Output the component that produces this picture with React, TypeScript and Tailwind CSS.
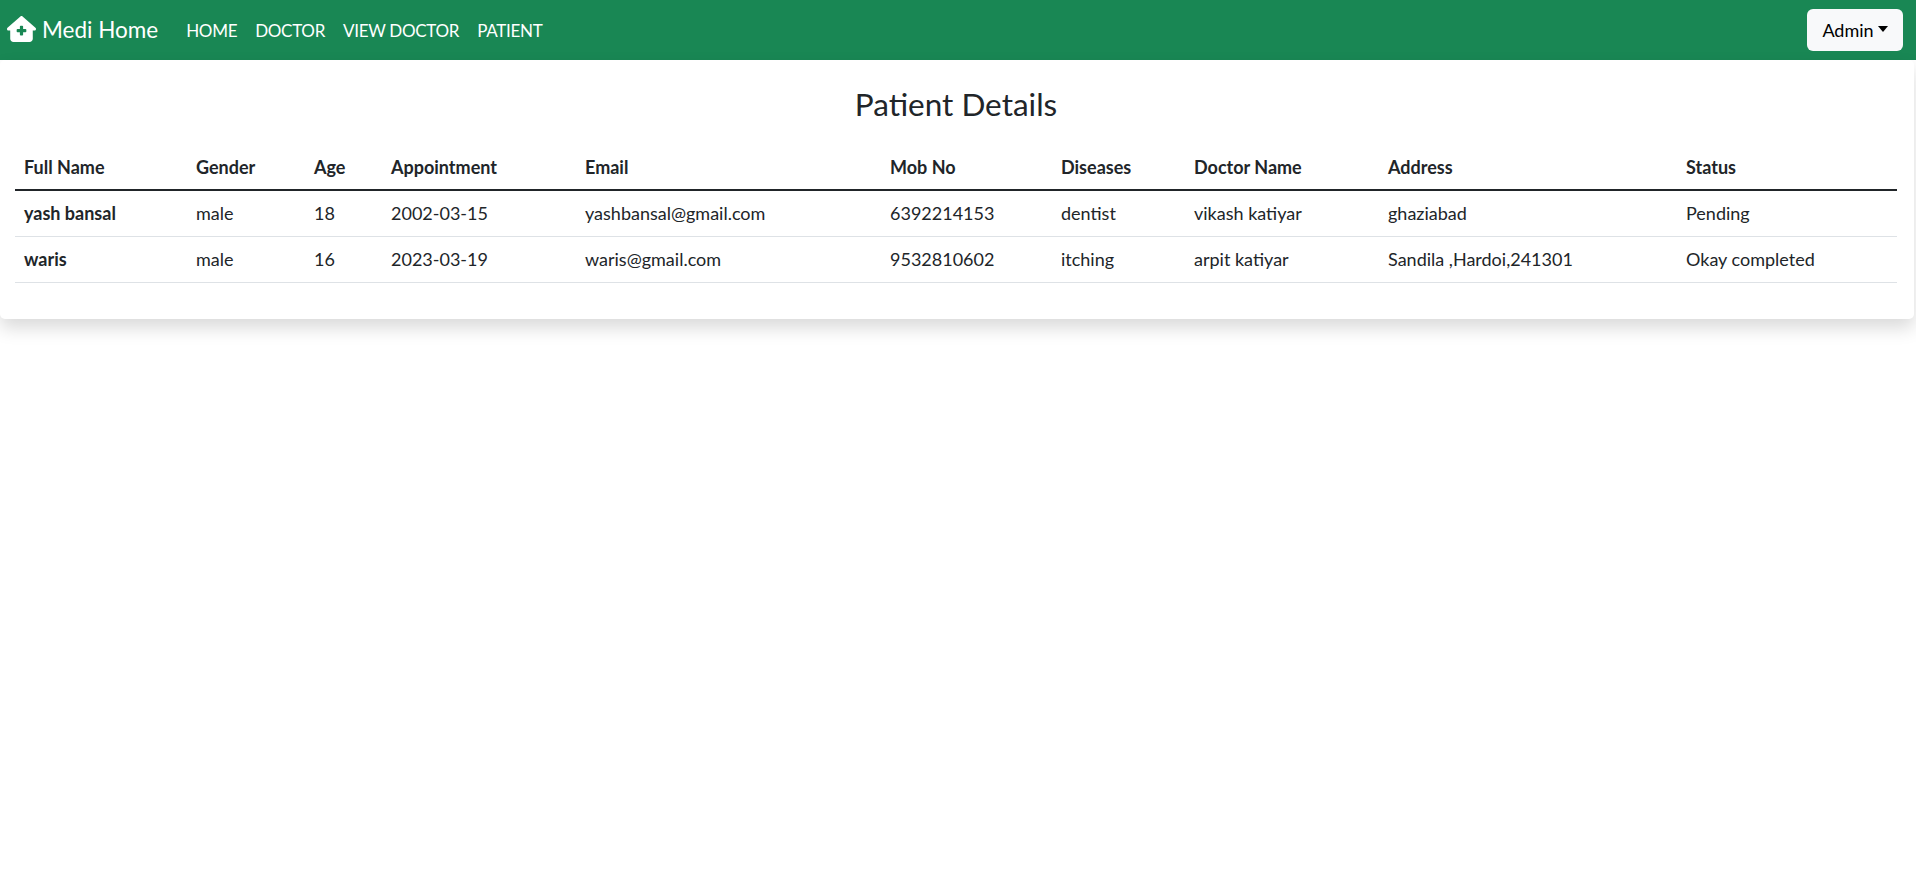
import React from "react";
import { FaHouseMedical } from "react-icons/fa6";

const headers: { label: string; w: string }[] = [
  { label: "Full Name", w: "w-[172px]" },
  { label: "Gender", w: "w-[118px]" },
  { label: "Age", w: "w-[77px]" },
  { label: "Appointment", w: "w-[194px]" },
  { label: "Email", w: "w-[305px]" },
  { label: "Mob No", w: "w-[171px]" },
  { label: "Diseases", w: "w-[133px]" },
  { label: "Doctor Name", w: "w-[194px]" },
  { label: "Address", w: "w-[298px]" },
  { label: "Status", w: "" },
];

const rows: string[][] = [
  ["yash bansal", "male", "18", "2002-03-15", "yashbansal@gmail.com", "6392214153", "dentist", "vikash katiyar", "ghaziabad", "Pending"],
  ["waris", "male", "16", "2023-03-19", "waris@gmail.com", "9532810602", "itching", "arpit katiyar", "Sandila ,Hardoi,241301", "Okay completed"],
];

export default function App() {
  return (
    <div className="min-h-screen bg-white text-[#212529] font-['Lato','Open_Sans',sans-serif]">
      <nav className="h-[60px] bg-[#198754] flex items-center justify-between pl-[7px] pr-[13px]">
        <div className="flex items-center">
          <a className="flex items-center text-white text-[22.5px] leading-[34px] mr-[19px]">
            <FaHouseMedical className="w-[29px] h-[26px] mr-[6px] mb-[3px]" />
            <span>Medi Home</span>
          </a>
          <ul className="flex items-center text-white text-[17px] tracking-[-0.3px] leading-[27px]">
            <li className="px-[9px]">HOME</li>
            <li className="px-[9px]">DOCTOR</li>
            <li className="px-[9px]">VIEW DOCTOR</li>
            <li className="px-[9px]">PATIENT</li>
          </ul>
        </div>
        <button className="h-[42px] w-[96px] rounded-[6px] bg-[#f8f9fa] text-[#000] text-[18px] flex items-center justify-center">
          <span>Admin</span>
          <span className="ml-[4px] mb-[3px] w-0 h-0 border-t-[6px] border-t-black border-x-[5px] border-x-transparent" />
        </button>
      </nav>
      <div className="bg-white rounded-[5px] shadow-[0_9px_18px_rgba(0,0,0,0.15)] mr-[2px] pl-[15px] pr-[17px] pt-[25px] pb-[36px]">
        <h3 className="text-center text-[31.5px] leading-[38px] mb-[21px]">Patient Details</h3>
        <table className="w-full table-fixed border-collapse text-[18px] leading-[27px]">
          <thead>
            <tr>
              {headers.map((h) => (
                <th key={h.label} className={`${h.w} text-left font-bold px-[9px] pt-[10px] pb-[8px] border-b-2 border-[#212529]`}>
                  {h.label}
                </th>
              ))}
            </tr>
          </thead>
          <tbody>
            {rows.map((r) => (
              <tr key={r[0]}>
                {r.map((c, i) => (
                  <td key={i} className={`px-[9px] py-[9px] border-b border-[#dee2e6] ${i === 0 ? "font-bold" : ""}`}>
                    {c}
                  </td>
                ))}
              </tr>
            ))}
          </tbody>
        </table>
      </div>
    </div>
  );
}
